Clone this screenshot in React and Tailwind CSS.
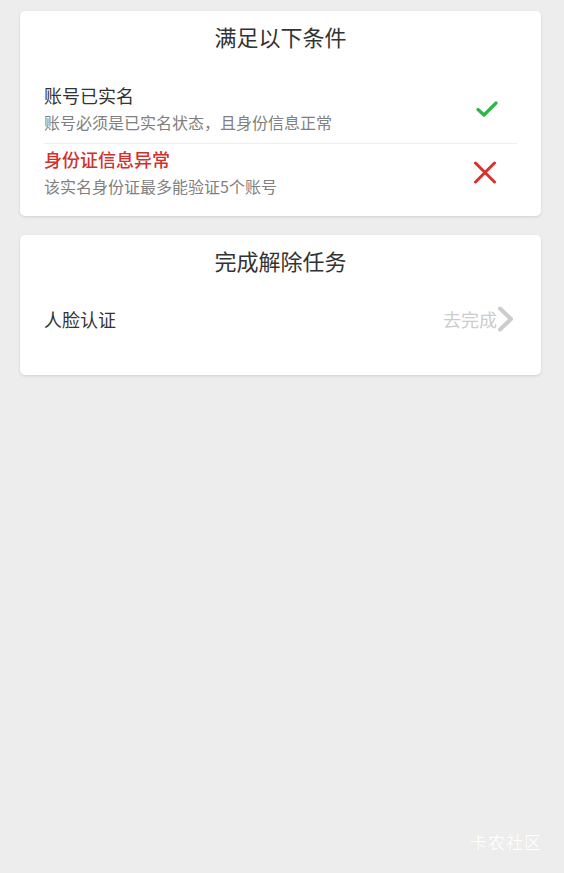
import React from 'react';

const font = { fontFamily: '"Noto Sans CJK SC", "Noto Sans", sans-serif' };

const CheckIcon = () => (
    <svg width="22" height="16" viewBox="0 0 22 16" fill="none">
        <path d="M2 8.5 L8 14 L20 2" stroke="#2eb548" strokeWidth="3.2" strokeLinecap="round" strokeLinejoin="round" />
    </svg>
);

const CrossIcon = () => (
    <svg width="24" height="23" viewBox="0 0 24 23" fill="none">
        <path d="M2.5 2 L21.5 21 M21.5 2 L2.5 21" stroke="#d9322c" strokeWidth="3" strokeLinecap="round" />
    </svg>
);

const Chevron = () => (
    <svg width="18" height="26" viewBox="0 0 18 26" fill="none">
        <path d="M3 2.5 L14 13 L3 23.5" stroke="#cccccc" strokeWidth="4" strokeLinecap="round" strokeLinejoin="round" />
    </svg>
);

const App = () => {
    return (
        <div className="relative min-h-[873px] bg-[#ededed] pt-[11px]" style={font}>
            {/* conditions card */}
            <div className="ml-[20px] mr-[23px] bg-white rounded-[5px] shadow-[0_1px_3px_rgba(0,0,0,0.12)] px-[24px] pb-[17px]">
                <div className="h-[54px] pb-[4px] flex items-center justify-center text-[22px] text-[#333]">满足以下条件</div>
                <div className="mt-[15px] pt-[3px] pb-[9px] flex items-center">
                    <div className="flex-1">
                        <div className="text-[18px] leading-[24px] text-[#333]">账号已实名</div>
                        <div className="mt-[3px] text-[16px] leading-[24px] text-[#808080]">账号必须是已实名状态，且身份信息正常</div>
                    </div>
                    <div className="w-[22px] mr-[19px] flex justify-center">
                        <CheckIcon />
                    </div>
                </div>
                <div className="border-t border-[#eeeeee] pt-[3px] pb-[1px] flex items-center">
                    <div className="flex-1">
                        <div className="text-[18px] leading-[24px] text-[#d0312d] font-medium">身份证信息异常</div>
                        <div className="mt-[3px] text-[16px] leading-[24px] text-[#808080]">该实名身份证最多能验证5个账号</div>
                    </div>
                    <div className="w-[24px] mr-[20px] flex justify-center">
                        <CrossIcon />
                    </div>
                </div>
            </div>

            {/* tasks card */}
            <div className="mt-[19px] ml-[20px] mr-[23px] bg-white rounded-[5px] shadow-[0_1px_3px_rgba(0,0,0,0.12)] px-[24px] pb-[24px]">
                <div className="h-[54px] pb-[4px] flex items-center justify-center text-[22px] text-[#333]">完成解除任务</div>
                <div className="h-[62px] pb-[2px] flex items-center justify-between">
                    <div className="text-[18px] text-[#333]">人脸认证</div>
                    <div className="flex items-center mr-[2px]">
                        <span className="text-[18px] text-[#cccccc]">去完成</span>
                        <Chevron />
                    </div>
                </div>
            </div>

            {/* watermark */}
            <div className="absolute right-[22px] bottom-[19px] text-[17px] tracking-[1px] text-white [text-shadow:0_0_1px_rgba(0,0,0,0.08)]">卡农社区</div>
        </div>
    );
};

export default App;
